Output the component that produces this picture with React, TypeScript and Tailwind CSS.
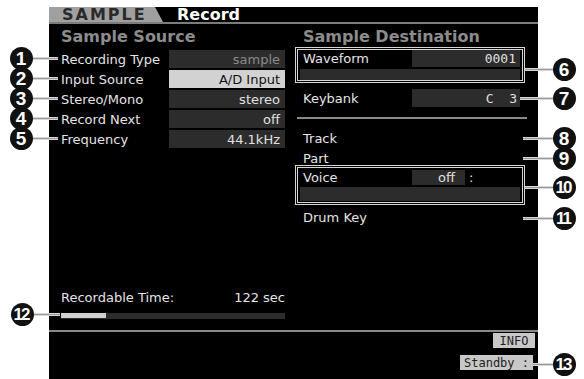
import React from "react";

const lcd = "font-['DejaVu_Sans',sans-serif]";
const mono = "font-['DejaVu_Sans_Mono',monospace]";

function Row({ label, value, kind }: { label: string; value: string; kind: "dim" | "sel" | "norm" }) {
  return (
    <div className="flex h-[18px] items-center">
      <div className="w-[108px] text-[13px] leading-none text-[#e4e4e4]">{label}</div>
      {kind === "sel" ? (
        <div className="flex h-full w-[116px] items-center justify-end bg-[#d2d2d2] pr-[5px] text-[13px] leading-none text-[#111]">{value}</div>
      ) : kind === "dim" ? (
        <div className="flex h-full w-[116px] items-center justify-end bg-[#2c2c2c] pr-[5px] text-[13px] leading-none text-[#8a8a8a]">{value}</div>
      ) : (
        <div className="flex h-full w-[116px] items-center justify-end bg-[#2c2c2c] pr-[5px] text-[13px] leading-none text-[#e0e0e0]">{value}</div>
      )}
    </div>
  );
}

function Callout({ n, x, y }: { n: string; x: number; y: number }) {
  const two = n.length > 1;
  return (
    <div
      className="absolute flex h-[23px] w-[23px] items-center justify-center rounded-full bg-[#111] font-['Liberation_Sans',sans-serif] font-bold leading-none text-white"
      style={{ left: x - 11.5, top: y - 11.5, fontSize: two ? 17 : 19, letterSpacing: two ? -2 : 0 }}
    >
      <span style={{ marginLeft: two ? -2 : 0 }}>{n}</span>
    </div>
  );
}

function Lead({ x1, x2, y }: { x1: number; x2: number; y: number }) {
  return <div className="absolute h-[3px] bg-[#999] border-y border-[#d8d8d8]" style={{ left: x1, width: x2 - x1, top: y - 1 }} />;
}

export default function App() {
  return (
    <div className={`relative h-[379px] w-[584px] overflow-hidden bg-white pl-[49px] pt-[7px] ${lcd}`}>
      <div className="flex h-[372px] w-[489px] flex-col bg-black">
        {/* title bar */}
        <div className="flex h-[17px] items-stretch border-b-2 border-[#7c7c7c]">
          <div className="flex w-[114px] items-center bg-[#a0a0a0] pl-[13px] text-[16px] font-bold leading-none tracking-[2px] text-[#2a2a2a] [clip-path:polygon(0_0,calc(100%-8px)_0,100%_100%,0_100%)]">
            SAMPLE
          </div>
          <div className="ml-[14px] flex items-center text-[16px] font-bold leading-none text-white">Record</div>
        </div>

        {/* body */}
        <div className="flex h-[306px] pl-[12px]">
          {/* left column */}
          <div className="flex w-[224px] flex-col">
            <div className="mt-[5px] h-[16px] text-[16px] font-bold leading-[16px] text-[#8c8c8c]">Sample Source</div>
            <div className="mt-[5px] flex flex-col gap-[2px]">
              <Row label="Recording Type" value="sample" kind="dim" />
              <Row label="Input Source" value="A/D Input" kind="sel" />
              <Row label="Stereo/Mono" value="stereo" kind="norm" />
              <Row label="Record Next" value="off" kind="norm" />
              <Row label="Frequency" value="44.1kHz" kind="norm" />
            </div>
            <div className="mt-[141px] flex h-[16px] items-center justify-between text-[13px] leading-none text-[#e4e4e4]">
              <span>Recordable Time:</span>
              <span>122 sec</span>
            </div>
            <div className="mt-[8px] flex h-[6px] bg-[#2c2c2c]">
              <div className="h-[5px] w-[45px] bg-[#cfcfcf]" />
            </div>
          </div>

          {/* right column */}
          <div className="ml-[10px] flex w-[230px] flex-col">
            <div className="mt-[5px] h-[16px] pl-[8px] text-[16px] font-bold leading-[16px] text-[#8c8c8c]">Sample Destination</div>

            <div className="mt-[2px] flex h-[36px] flex-col border-[3px] border-double border-[#d6d6d6]">
              <div className="flex h-[17px] items-center">
                <span className="pl-[5px] text-[13px] leading-none text-[#e4e4e4]">Waveform</span>
                <div className={`ml-auto mr-[2px] flex h-full w-[108px] items-center justify-end bg-[#2c2c2c] pr-[4px] text-[13px] leading-none text-[#e0e0e0] ${mono}`}>0001</div>
              </div>
              <div className="mx-[2px] mt-[2px] h-[11px] bg-[#2c2c2c]" />
            </div>

            <div className="mt-[6px] flex h-[18px] items-center">
              <span className="pl-[8px] text-[13px] leading-none text-[#e4e4e4]">Keybank</span>
              <div className={`ml-auto mr-[5px] flex h-full w-[108px] items-center justify-end whitespace-pre bg-[#2c2c2c] pr-[3px] text-[13px] leading-none text-[#e0e0e0] ${mono}`}>C  3</div>
            </div>

            <div className="ml-[2px] mt-[10px] h-[2px] w-[230px] bg-[#8a8a8a]" />

            <div className="mt-[10px] flex h-[18px] items-center pl-[8px] text-[13px] leading-none text-[#e4e4e4]">Track</div>
            <div className="mt-[3px] flex h-[16px] items-center pl-[8px] text-[13px] leading-none text-[#e4e4e4]">Part</div>

            <div className="mt-[-1px] flex h-[40px] flex-col border-[3px] border-double border-[#d6d6d6]">
              <div className="flex h-[18px] items-center">
                <span className="w-[114px] pl-[5px] text-[13px] leading-none text-[#e4e4e4]">Voice</span>
                <div className="flex h-[15px] w-[53px] items-center justify-end bg-[#2c2c2c] pr-[10px] text-[13px] leading-none text-[#e0e0e0]">off</div>
                <span className="pl-[4px] text-[13px] leading-none text-[#e0e0e0]">:</span>
              </div>
              <div className="mx-[2px] mt-[1px] h-[14px] bg-[#2c2c2c]" />
            </div>

            <div className="mt-[3px] flex h-[18px] items-center pl-[8px] text-[13px] leading-none text-[#e4e4e4]">Drum Key</div>
          </div>
        </div>

        <div className="h-[2px] bg-[#8a8a8a]" />

        {/* footer */}
        <div className="flex flex-col items-end pr-[3px] pt-[1px]">
          <div className={`flex h-[15px] w-[42px] items-center justify-center bg-[#c8c8c8] text-[12px] leading-none text-[#222] ${mono}`}>INFO</div>
          <div className={`mr-[2px] mt-[7px] flex h-[15px] w-[73px] items-center justify-center whitespace-pre bg-[#c8c8c8] text-[12px] leading-none text-[#222] ${mono}`}>Standby :</div>
        </div>
      </div>

      {/* callout leader lines */}
      <Lead x1={30} x2={58} y={58} />
      <Lead x1={30} x2={58} y={78} />
      <Lead x1={30} x2={58} y={98} />
      <Lead x1={30} x2={58} y={118} />
      <Lead x1={30} x2={58} y={138} />
      <Lead x1={30} x2={60} y={314} />
      <Lead x1={525} x2={556} y={69} />
      <Lead x1={520} x2={556} y={98} />
      <Lead x1={523} x2={556} y={138} />
      <Lead x1={523} x2={556} y={158} />
      <Lead x1={525} x2={556} y={187} />
      <Lead x1={523} x2={556} y={218} />
      <Lead x1={533} x2={556} y={364} />

      {/* callouts */}
      <Callout n="1" x={21} y={58} />
      <Callout n="2" x={21} y={78} />
      <Callout n="3" x={21} y={98} />
      <Callout n="4" x={21} y={118} />
      <Callout n="5" x={21} y={138} />
      <Callout n="12" x={22} y={314} />
      <Callout n="6" x={564} y={69} />
      <Callout n="7" x={564} y={98} />
      <Callout n="8" x={564} y={138} />
      <Callout n="9" x={564} y={158} />
      <Callout n="10" x={564} y={187} />
      <Callout n="11" x={564} y={218} />
      <Callout n="13" x={564} y={364} />
    </div>
  );
}
